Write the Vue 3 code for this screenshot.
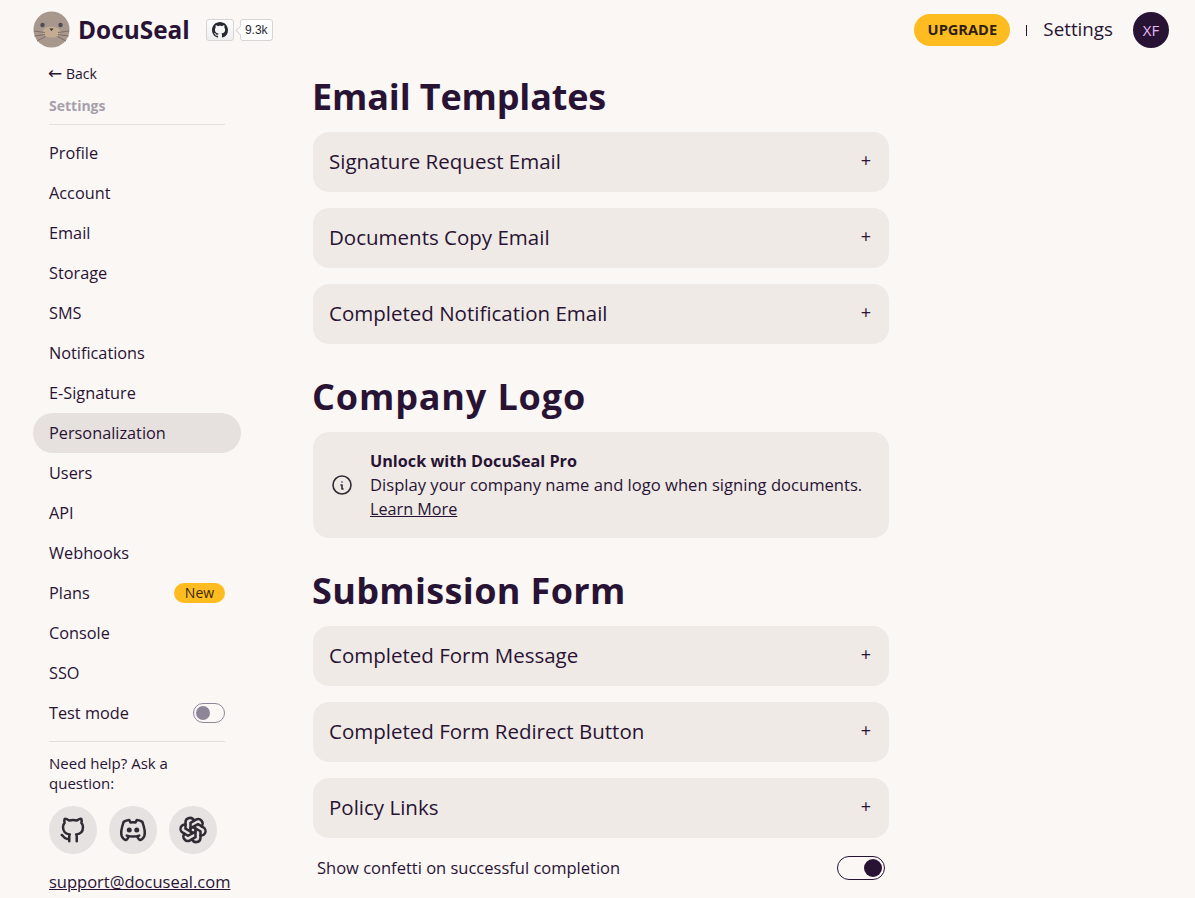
<script setup>
const nav = ['Profile','Account','Email','Storage','SMS','Notifications','E-Signature','Personalization','Users','API','Webhooks','Plans','Console','SSO']
const sec1 = ['Signature Request Email','Documents Copy Email','Completed Notification Email']
const sec2 = ['Completed Form Message','Completed Form Redirect Button','Policy Links']
</script>

<template>
  <div class="page">
    <header class="top">
      <div class="brand">
        <svg class="seal" viewBox="0 0 37 37" width="37" height="37">
          <circle cx="18.5" cy="18.5" r="18" fill="#a8978c"/>
          <ellipse cx="18.5" cy="21" rx="9" ry="5.5" fill="#c4ab93"/>
          <circle cx="9.5" cy="14" r="2.2" fill="#4e4a58"/>
          <circle cx="27.5" cy="14" r="2.2" fill="#4e4a58"/>
          <path d="M16.3 17.5h4.4l-2.2 2.6z" fill="#3d3440"/>
          <path d="M12 21.5 1 20M12 23.5 1.5 25M12.5 25.5 4 30M25 21.5 36 20M25 23.5 35.5 25M24.5 25.5 33 30" stroke="#7d6d64" stroke-width="1" fill="none"/>
        </svg>
        <span class="name">DocuSeal</span>
        <span class="gh">
          <svg viewBox="0 0 16 16" width="16" height="16"><path fill="#24292f" d="M8 0C3.58 0 0 3.58 0 8c0 3.54 2.29 6.53 5.47 7.59.4.07.55-.17.55-.38 0-.19-.01-.82-.01-1.49-2.01.37-2.53-.49-2.69-.94-.09-.23-.48-.94-.82-1.13-.28-.15-.68-.52-.01-.53.63-.01 1.08.58 1.23.82.72 1.21 1.87.87 2.33.66.07-.52.28-.87.51-1.07-1.78-.2-3.64-.89-3.64-3.95 0-.87.31-1.59.82-2.15-.08-.2-.36-1.02.08-2.12 0 0 .67-.21 2.2.82.64-.18 1.32-.27 2-.27.68 0 1.36.09 2 .27 1.53-1.04 2.2-.82 2.2-.82.44 1.1.16 1.92.08 2.12.51.56.82 1.27.82 2.15 0 3.07-1.87 3.75-3.65 3.95.29.25.54.73.54 1.48 0 1.07-.01 1.93-.01 2.2 0 .21.15.46.55.38A8.013 8.013 0 0016 8c0-4.42-3.58-8-8-8z"/></svg>
        </span>
        <span class="count">9.3k</span>
      </div>
      <div class="actions">
        <span class="upgrade">UPGRADE</span>
        <span class="sep"></span>
        <span class="set">Settings</span>
        <span class="avatar">XF</span>
      </div>
    </header>

    <div class="body">
      <aside class="side">
        <div class="back"><span class="arrow">←</span> Back</div>
        <div class="stitle">Settings</div>
        <div class="rule"></div>
        <ul class="menu">
          <li v-for="n in nav" :key="n" :class="['item', { active: n === 'Personalization' }]">
            <span>{{ n }}</span>
            <span v-if="n === 'Plans'" class="new">New</span>
          </li>
          <li class="item">
            <span>Test mode</span>
            <span class="tgl-off"><i></i></span>
          </li>
        </ul>
        <div class="rule r2"></div>
        <div class="help">Need help? Ask a question:</div>
        <div class="socials">
          <span class="soc">
            <svg viewBox="0 0 24 24" width="30" height="30"><path d="M9 19c-4.3 1.4 -4.3 -2.5 -6 -3m12 5v-3.5c0 -1 .1 -1.4 -.5 -2c2.8 -.3 5.5 -1.4 5.5 -6a4.6 4.6 0 0 0 -1.3 -3.2a4.2 4.2 0 0 0 -.1 -3.2s-1.1 -.3 -3.5 1.3a12.3 12.3 0 0 0 -6.2 0c-2.4 -1.6 -3.5 -1.3 -3.5 -1.3a4.2 4.2 0 0 0 -.1 3.2a4.6 4.6 0 0 0 -1.3 3.2c0 4.6 2.7 5.7 5.5 6c-.6 .6 -.6 1.2 -.5 2v3.5"/></svg>
          </span>
          <span class="soc">
            <svg viewBox="0 0 24 24" width="30" height="30"><path d="M8 12a1 1 0 1 0 2 0a1 1 0 0 0 -2 0"/><path d="M14 12a1 1 0 1 0 2 0a1 1 0 0 0 -2 0"/><path d="M15.5 17c0 1 1.5 3 2 3c1.5 0 2.833 -1.667 3.5 -3c.667 -1.667 .5 -5.833 -1.5 -11.5c-1.457 -1.015 -3 -1.34 -4.5 -1.5l-.972 1.923a11.913 11.913 0 0 0 -4.053 0l-.975 -1.923c-1.5 .16 -3.043 .485 -4.5 1.5c-2 5.667 -2.167 9.833 -1.5 11.5c.667 1.333 2 3 3.5 3c.5 0 2 -2 2 -3"/><path d="M7 16.5c3.5 1 6.5 1 10 0"/></svg>
          </span>
          <span class="soc">
            <svg viewBox="0 0 24 24" width="30" height="30"><path d="M11.217 19.384a3.501 3.501 0 0 0 6.783 -1.217v-5.167l-6 -3.35"/><path d="M5.214 15.014a3.501 3.501 0 0 0 4.446 5.266l4.34 -2.534v-6.946"/><path d="M6 7.63c-1.391 -.236 -2.787 .395 -3.534 1.689a3.474 3.474 0 0 0 1.271 4.745l4.263 2.514l6 -3.348"/><path d="M12.783 4.616a3.501 3.501 0 0 0 -6.783 1.217v5.067l6 3.45"/><path d="M18.786 8.986a3.501 3.501 0 0 0 -4.446 -5.266l-4.34 2.534v6.946"/><path d="M18 16.302c1.391 .236 2.787 -.395 3.534 -1.689a3.474 3.474 0 0 0 -1.271 -4.745l-4.263 -2.514l-6 3.348"/></svg>
          </span>
        </div>
        <a class="mail">support@docuseal.com</a>
      </aside>

      <main class="main">
        <h1 class="h1">Email Templates</h1>
        <div class="stack">
          <div v-for="c in sec1" :key="c" class="card"><span>{{ c }}</span><span class="plus">+</span></div>
        </div>
        <h1 class="h2">Company Logo</h1>
        <div class="alert">
          <svg viewBox="0 0 24 24" width="24" height="24"><path d="M3 12a9 9 0 1 0 18 0a9 9 0 0 0 -18 0"/><path d="M12 9h.01"/><path d="M11 12h1v4h1"/></svg>
          <div class="atext">
            <b>Unlock with DocuSeal Pro</b>
            <div class="adesc">Display your company name and logo when signing documents.</div>
            <a>Learn More</a>
          </div>
        </div>
        <h1 class="h3">Submission Form</h1>
        <div class="stack">
          <div v-for="c in sec2" :key="c" class="card"><span>{{ c }}</span><span class="plus">+</span></div>
        </div>
        <div class="confetti">
          <span class="clabel">Show confetti on successful completion</span>
          <span class="tgl-on"><i></i></span>
        </div>
      </main>
    </div>
  </div>
</template>

<style>
html, body { margin: 0; height: 898px; overflow: hidden; background: #faf7f5; }
</style>

<style scoped>
.page { width: 1195px; height: 898px; overflow: hidden; background: #faf7f5; color: #291334; font-family: "Open Sans", "Noto Sans", sans-serif; font-size: 16px; }
.top { height: 60px; padding: 0 26px 0 33px; display: flex; align-items: center; justify-content: space-between; }
.brand { display: flex; align-items: center; }
.seal { display: block; margin-top: -1px; }
.name { margin: 0 0 2px 8px; font-size: 24.4px; font-weight: 700; }
.gh { margin-left: 16px; width: 28px; height: 22px; display: flex; align-items: center; justify-content: center; box-sizing: border-box; border: 1px solid #d5d5d5; border-radius: 3px; background: linear-gradient(#fcfcfc, #eeeeee); }
.count { margin-left: 6px; width: 33px; height: 22px; text-align: center; box-sizing: border-box; border: 1px solid #d5d5d5; border-radius: 3px; background: #fff; font: 400 12px/20px "Liberation Sans", sans-serif; color: #24292f; position: relative; }
.count::before { content: ""; position: absolute; left: -4px; top: 7px; width: 6px; height: 6px; background: #fff; border-left: 1px solid #d5d5d5; border-bottom: 1px solid #d5d5d5; transform: rotate(45deg); }
.actions { display: flex; align-items: center; }
.upgrade { width: 96px; height: 32px; padding-bottom: 2px; box-sizing: border-box; border-radius: 16px; background: #febc20; display: flex; align-items: center; justify-content: center; font-size: 14.6px; font-weight: 700; color: #2e1d10; }
.sep { width: 1px; height: 11px; margin: 0 16px; background: #291334; }
.set { font-size: 18.8px; margin-bottom: 2px; }
.avatar { margin-left: 20px; width: 36px; height: 36px; border-radius: 50%; background: #291334; color: #e9b8f7; display: flex; align-items: center; justify-content: center; font-size: 15px; }
.body { display: flex; }
.side { width: 208px; margin-left: 33px; flex: none; }
.back { height: 20px; margin-top: 4px; padding-left: 16px; font-size: 14px; line-height: 20px; }
.arrow { font-family: "DejaVu Sans", sans-serif; font-size: 17px; line-height: 16px; margin-left: -1px; }
.stitle { margin-top: 12px; padding-left: 16px; height: 20px; line-height: 20px; font-size: 14px; font-weight: 700; color: #a79fac; }
.rule { height: 1px; margin: 8px 16px 0; background: #e3dfde; }
.r2 { margin-top: 8px; }
.menu { list-style: none; margin: 8px 0 0; padding: 0; }
.item { height: 40px; padding: 0 16px; display: flex; align-items: center; justify-content: space-between; border-radius: 20px; font-size: 16.3px; }
.active { background: #e6e1de; }
.new { height: 20px; width: 51px; border-radius: 10px; background: #febc20; color: #3c2a10; font-size: 14px; line-height: 20px; text-align: center; }
.tgl-off { width: 32px; height: 20px; box-sizing: border-box; border: 1px solid #8f8598; border-radius: 10px; padding: 2px; display: flex; }
.tgl-off i { width: 14px; height: 14px; border-radius: 50%; background: #8f8598; }
.help { margin: 11px 16px 0; font-size: 15px; line-height: 20px; }
.socials { display: flex; gap: 12px; margin: 13px 16px 0; }
.soc { width: 48px; height: 48px; border-radius: 50%; background: #e6e2e1; display: flex; align-items: center; justify-content: center; }
.soc svg, .alert svg { fill: none; stroke: #2f2a33; stroke-width: 2; stroke-linecap: round; stroke-linejoin: round; }
.mail { display: block; margin: 16px 0 0 16px; text-decoration: underline; white-space: nowrap; font-size: 16.5px; line-height: 24px; }
.main { width: 576px; margin-left: 72px; flex: none; }
h1 { margin: 13px 0 11px -1px; font-size: 36px; line-height: 48px; font-weight: 700; }
.h1 { letter-spacing: -0.15px; }
.h2 { margin-top: 29px; letter-spacing: 0.85px; }
.h3 { margin-top: 29px; letter-spacing: 0.35px; }
.stack { display: flex; flex-direction: column; gap: 16px; }
.card { height: 60px; padding: 0 16px 2px; box-sizing: border-box; display: flex; align-items: center; justify-content: space-between; background: #efeae6; border-radius: 16px; font-size: 20.5px; }
.plus { font-size: 18px; padding-right: 2px; margin-bottom: 2px; }
.alert { height: 106px; padding: 0 17px; box-sizing: border-box; display: flex; align-items: center; gap: 16px; background: #efeae6; border-radius: 16px; }
.alert svg { stroke-width: 1.6; flex: none; }
.atext { line-height: 24px; font-size: 16.2px; white-space: nowrap; }
.adesc { font-size: 16.6px; }
.atext a { text-decoration: underline; }
.confetti { margin-top: 18px; padding: 0 4px; height: 24px; display: flex; align-items: center; justify-content: space-between; font-size: 16.5px; }
.clabel { margin-bottom: 2px; }
.tgl-on { width: 48px; height: 24px; box-sizing: border-box; border: 1px solid #291334; border-radius: 12px; padding: 2px; display: flex; justify-content: flex-end; }
.tgl-on i { width: 18px; height: 18px; border-radius: 50%; background: #291334; }
</style>
